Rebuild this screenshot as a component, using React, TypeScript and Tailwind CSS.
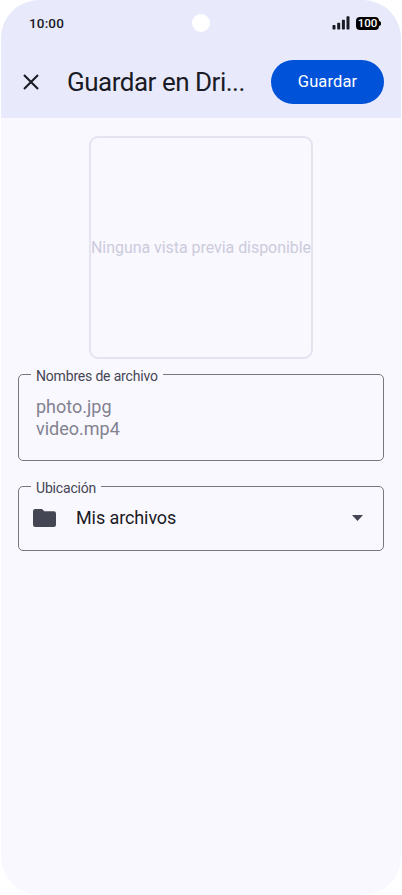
import type { ReactNode } from "react";

function StatusBar() {
  return (
    <div className="grid h-[46px] grid-cols-3 items-center pl-[29px] pr-[20px]">
      <span className="font-[Roboto] text-[13.5px] font-medium leading-4 tracking-[0.15px] text-[#1b1b25]">10:00</span>
      <span className="ml-[46px] size-[18px] rounded-full bg-white" />
      <div className="flex items-center justify-end gap-[6px]">
        <svg width="18" height="14" viewBox="0 0 18 14" fill="#1b1b25">
          <rect x="0.5" y="9" width="3" height="4.5" rx="0.7" />
          <rect x="5.2" y="6.7" width="3" height="6.8" rx="0.7" />
          <rect x="9.9" y="3.7" width="3" height="9.8" rx="0.7" />
          <rect x="14.5" y="0.2" width="3" height="13.3" rx="0.7" />
        </svg>
        <div className="flex items-center">
          <span className="flex h-[13px] w-[23px] items-center justify-center rounded-[4px] bg-black pt-px font-[Roboto] text-[11.5px] font-medium leading-none tracking-[-0.1px] text-white">
            100
          </span>
          <span className="h-[5px] w-[2px] rounded-r-[2px] bg-black" />
        </div>
      </div>
    </div>
  );
}

function TopBar() {
  return (
    <header className="flex h-[72px] items-center pl-[23px] pr-[18px]">
      <svg className="shrink-0" width="16" height="16" viewBox="0 0 16 16" stroke="#1b1b25" strokeWidth="2.1" fill="none">
        <path d="M1 1L15 15M15 1L1 15" />
      </svg>
      <h1 className="ml-[28px] w-[204px] shrink-0 whitespace-nowrap font-[Roboto] text-[26px] font-normal leading-8 tracking-[-0.49px] text-[#1b1b25]">
        Guardar en Dri...
      </h1>
      <button className="h-[44px] w-[113px] shrink-0 rounded-full bg-[#0052d9] pt-px font-[Roboto] text-[16.5px] font-normal tracking-[0.1px] text-white">
        Guardar
      </button>
    </header>
  );
}

function Field({ label, className, children }: { label: string; className: string; children: ReactNode }) {
  return (
    <fieldset className={`mx-[18px] rounded-[5px] border border-[#777783] pl-[12px] ${className}`}>
      <legend className="h-[16px] px-[5px] text-[14px] leading-[20px] tracking-[-0.18px] text-[#454653]">{label}</legend>
      {children}
    </fieldset>
  );
}

export default function App() {
  return (
    <div className="h-[895px] w-[402px] bg-white px-px font-[Roboto]">
      <div className="h-full overflow-hidden rounded-[38px] bg-[#f9f8ff]">
        <div className="h-[118px] bg-[#e8eafc]">
          <div className="-ml-px">
            <StatusBar />
            <TopBar />
          </div>
        </div>
        <main className="-mx-px">
          <div className="ml-[89px] mt-[18px] flex h-[223px] w-[224px] items-center justify-center rounded-[9px] border-2 border-[#e4e3f0]">
            <span className="whitespace-nowrap text-[16px] tracking-[-0.05px] text-[#cccbdb]">
              Ninguna vista previa disponible
            </span>
          </div>
          <Field label="Nombres de archivo" className="mt-[7px] h-[95px]">
            <div className="pl-[5px] pt-[14px] text-[18px] leading-[22px] text-[#828290]">
              <p>photo.jpg</p>
              <p>video.mp4</p>
            </div>
          </Field>
          <Field label="Ubicación" className="mt-[17px] h-[73px]">
            <div className="flex h-[48px] items-center pl-[2px] pr-[20px]">
              <svg width="23" height="18" viewBox="0 0 23 18" fill="#454653">
                <path d="M2.2 0H9l2.3 2.2h9.5A2.2 2.2 0 0 1 23 4.4v11.4a2.2 2.2 0 0 1-2.2 2.2H2.2A2.2 2.2 0 0 1 0 15.800V2.200A2.200 2.200 0 0 1 2.200 0Z" />
              </svg>
              <span className="ml-[20px] text-[18px] leading-[22px] tracking-[-0.1px] text-[#1b1b25]">Mis archivos</span>
              <svg className="ml-auto" width="11" height="6" viewBox="0 0 11 6" fill="#454653">
                <path d="M0 0h11L5.500 6Z" />
              </svg>
            </div>
          </Field>
        </main>
      </div>
    </div>
  );
}
